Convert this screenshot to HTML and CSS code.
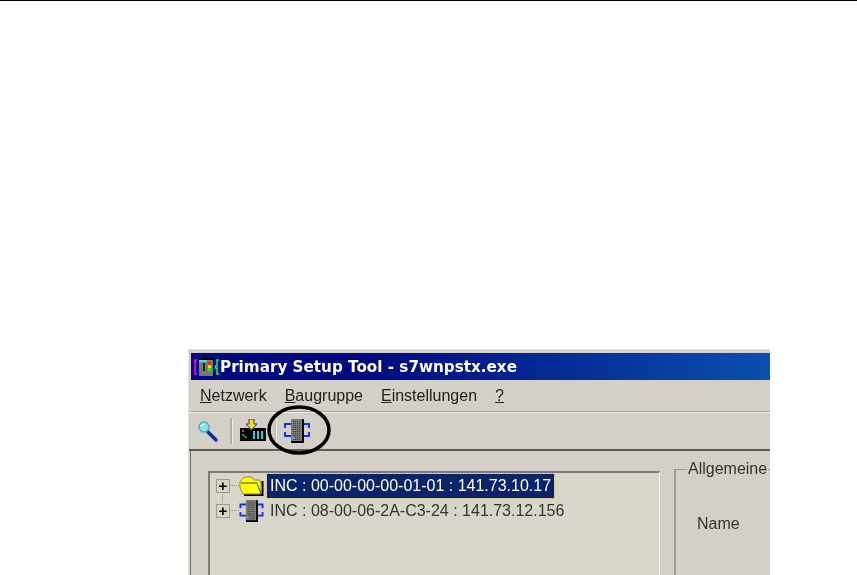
FILE: index.html
```html
<!DOCTYPE html>
<html lang="de">
<head>
<meta charset="utf-8">
<title>Primary Setup Tool</title>
<link rel="stylesheet" href="styles.css">
</head>
<body>
<div class="page">
  <div class="window">
    <div class="titlebar">
      <svg class="app-icon" width="26" height="20" viewBox="0 0 26 20">
        <path d="M3 3H1V17H3" fill="none" stroke="#f0f" stroke-width="1.5"/>
        <rect x="5" y="1" width="15" height="3" fill="#000"/>
        <rect x="5" y="3" width="14" height="16" fill="#777"/>
        <rect x="5" y="3" width="8" height="2" fill="#2ee"/>
        <rect x="9" y="6" width="2" height="8" fill="#222"/>
        <rect x="14" y="5" width="3" height="3" fill="#f22"/>
        <rect x="14" y="8" width="3" height="3" fill="#fe0"/>
        <rect x="14" y="11" width="3" height="3" fill="#2e2"/>
        <path d="M25 3H23V9H21.500V11H23V17H25" fill="none" stroke="#0f6" stroke-width="1.5"/>
      </svg>
      <span class="title-text">Primary Setup Tool - s7wnpstx.exe</span>
    </div>
    <div class="menubar">
      <span class="menu-item"><u>N</u>etzwerk</span>
      <span class="menu-item"><u>B</u>augruppe</span>
      <span class="menu-item"><u>E</u>instellungen</span>
      <span class="menu-item"><u>?</u></span>
    </div>
    <div class="toolbar">
      <svg class="tool" width="24" height="24" viewBox="0 0 24 24">
        <path d="M12 13L20 21" stroke="#0b2f9f" stroke-width="3.500" stroke-linecap="round"/>
        <circle cx="8" cy="8" r="5" fill="#7fe7e3" stroke="#5aa9aa" stroke-width="1.500"/>
        <path d="M5 7L8 5" stroke="#e8ffff" stroke-width="1.500"/>
      </svg>
      <span class="tool-sep"></span>
      <svg class="tool" width="29" height="24" viewBox="0 0 29 24">
        <rect x="1" y="9" width="26" height="13" fill="#000"/>
        <path d="M10 0H15V5H18L12.500 11L7 5H10Z" fill="#f0e000" stroke="#333a80" stroke-width="1"/>
        <rect x="3" y="11" width="2" height="2" fill="#e33"/>
        <path d="M3 15L8 19" stroke="#18a0a0" stroke-width="1.500"/>
        <path d="M15 12V20M19 12V20M23 12V20" stroke="#20d0d0" stroke-width="2"/>
      </svg>
      <span class="tool-sep tool-sep-light"></span>
      <svg class="tool" width="26" height="26" viewBox="0 0 26 26">
        <use href="#chip"/>
      </svg>
      <svg class="callout" width="66" height="52" viewBox="0 0 66 52">
        <ellipse cx="33" cy="26" rx="30" ry="23" fill="none" stroke="#000" stroke-width="3.500"/>
      </svg>
    </div>
    <div class="client">
      <div class="tree">
        <div class="tree-row">
          <span class="expander">+</span>
          <span class="dots"></span>
          <svg class="node-icon" width="25" height="22" viewBox="0 0 25 22">
            <path d="M23.500 6V20H5" fill="none" stroke="#000" stroke-width="2"/>
            <path d="M1 7L5 2H13L15 5H21L22 9V19H4L1 13Z" fill="#ffff00" stroke="#8a8a50" stroke-width="1"/>
            <path d="M2 8H18L22 19" fill="none" stroke="#44442a" stroke-width="1"/>
          </svg>
          <span class="node-label selected">INC : 00-00-00-00-01-01 : 141.73.10.17</span>
        </div>
        <div class="tree-row">
          <span class="expander expander-joined">+</span>
          <span class="dots"></span>
          <svg class="node-icon" width="25" height="24" viewBox="0 0 26 26">
            <g id="chip">
              <path d="M1 10V6H8M1 14V18H8M18 6H25V10M18 18H25V14" fill="none" stroke="#1530f0" stroke-width="2"/>
              <rect x="7" y="1" width="13" height="24" rx="1" fill="#000"/>
              <rect x="7" y="1" width="11" height="22" fill="#7a7a78"/>
              <path d="M9.500 3V22M11.500 3V22M13.500 3V22M15.500 3V22" stroke="#3c3c3c" stroke-width="1" stroke-dasharray="1 1"/>
              <rect x="8" y="19" width="2" height="2" fill="#1cc"/>
            </g>
          </svg>
          <span class="node-label">INC : 08-00-06-2A-C3-24 : 141.73.12.156</span>
        </div>
      </div>
      <fieldset class="group">
        <legend class="group-title">Allgemeine</legend>
        <div class="field-label">Name</div>
      </fieldset>
    </div>
  </div>
</div>
</body>
</html>
```
FILE: styles.css
```css
html, body {
  margin: 0;
  padding: 0;
  background: #fff;
}
.page {
  height: 574px;
  overflow: hidden;
  border-top: 1px solid #000;
  padding-left: 188px;
  box-sizing: content-box;
}
.window {
  width: 582px;
  height: 300px;
  margin-top: 348px;
  box-sizing: border-box;
  background: #d4d0c8;
  border-top: 1px solid #e4e1da;
  border-left: 1px solid #e4e1da;
  padding: 3px 0 0 2px;
  font-family: "Liberation Sans", Arial, sans-serif;
  color: #222;
  filter: blur(0.4px);
}
.titlebar {
  height: 27px;
  display: flex;
  align-items: center;
  background: linear-gradient(90deg, #000a80 0%, #000a80 30%, #0a50ae 100%);
  color: #fff;
}
.app-icon {
  margin-left: 3px;
  flex: none;
}
.title-text {
  font-family: "DejaVu Sans", Verdana, sans-serif;
  font-weight: 700;
  font-size: 15.2px;
  white-space: nowrap;
}
.menubar {
  height: 31px;
  display: flex;
  align-items: center;
  gap: 18px;
  padding-left: 9px;
  border-bottom: 1px solid #a8a48f;
  font-size: 16px;
}
.toolbar {
  position: relative;
  height: 39px;
  display: flex;
  align-items: center;
  border-top: 1px solid #eeece6;
  border-bottom: 2px solid #5c5a52;
  box-sizing: border-box;
  padding-left: 7px;
  margin-left: -2px;
}
.tool {
  flex: none;
}
.tool-sep {
  width: 2px;
  height: 26px;
  margin: 0 6px 0 10px;
  background: #b3af9f;
  border-right: 1px solid #eeece6;
}
.tool-sep-light {
  margin: 0 7px 0 6px;
  background: #c4c0b2;
}
.callout {
  position: absolute;
  left: 77px;
  top: -9px;
}
.client {
  display: flex;
  align-items: flex-start;
  margin-left: -1px;
  padding-left: 17px;
  height: 130px;
  border-left: 1px solid #77756c;
}
.tree {
  width: 452px;
  height: 120px;
  margin-top: 20px;
  box-sizing: border-box;
  flex: none;
  background: #d8d5cb;
  border-top: 2px solid #7f7d6e;
  border-left: 2px solid #7f7d6e;
  border-right: 1px solid #eeece6;
  padding: 0 0 0 6px;
  font-size: 16px;
}
.tree-row {
  height: 25px;
  display: flex;
  align-items: center;
}
.expander {
  position: relative;
  width: 14px;
  height: 14px;
  flex: none;
  box-sizing: border-box;
  border: 1px solid #a09c86;
  display: flex;
  align-items: center;
  justify-content: center;
  font-size: 15px;
  font-weight: 700;
  line-height: 1;
  color: #000;
}
.expander-joined::before {
  content: "";
  position: absolute;
  left: 5px;
  top: -13px;
  height: 11px;
  border-left: 1px dotted #8f8c7a;
}
.dots {
  width: 9px;
  flex: none;
  border-top: 1px dotted #9c9986;
}
.node-icon {
  flex: none;
}
.node-label {
  margin-left: 3px;
  padding: 3px;
  white-space: nowrap;
  color: #333;
}
.selected {
  background: #0a246a;
  color: #fff;
  outline: 1px dotted #c9b98a;
}
.group {
  margin: 9px 0 0 14px;
  padding: 0 0 0 21px;
  width: 110px;
  height: 130px;
  box-sizing: border-box;
  border: 0;
  border-top: 1px solid #a09c8a;
  border-left: 2px solid #a09c8a;
  font-size: 16px;
}
.group-title {
  margin-left: -10px;
  padding: 0 1px;
  color: #333;
}
.field-label {
  margin-top: 37px;
  color: #333;
}
```
